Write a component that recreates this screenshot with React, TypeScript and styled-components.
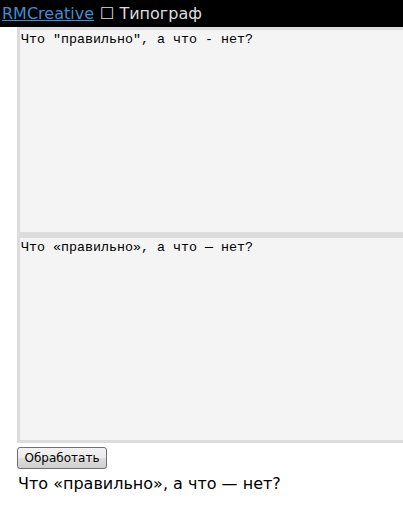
import React from "react";
import styled, { createGlobalStyle } from "styled-components";

const Global = createGlobalStyle`
  html, body { margin: 0; padding: 0; background: #fff; overflow: hidden; }
  body { font-family: "DejaVu Sans", Verdana, sans-serif; }
`;

const Header = styled.header`
  background: #000;
  height: 27px;
  display: flex;
  align-items: center;
  padding-left: 2px;
  font-size: 16px;
  color: #dcdcdc;
  white-space: nowrap;
`;

const Brand = styled.a`
  color: #3b8fd4;
  text-decoration: underline;
  margin-right: 6px;
`;

const Form = styled.form`
  display: flex;
  flex-direction: column;
  align-items: flex-start;
  padding-left: 17px;
`;

const Area = styled.textarea`
  box-sizing: border-box;
  width: 420px;
  height: 208px;
  margin: 0;
  border: 3px solid #dcdcdc;
  background: #f4f4f4;
  font-family: "Liberation Mono", "Courier New", monospace;
  font-size: 13.33px;
  line-height: 15px;
  color: #000;
  padding: 2px 1px;
  resize: none;
  outline: none;
  display: block;
`;

const Button = styled.button`
  margin-top: 4px;
  height: 22px;
  width: 90px;
  padding: 0;
  border: 1px solid #707070;
  border-radius: 3px;
  background: linear-gradient(#f2f2f2 0%, #ebebeb 50%, #dddddd 51%, #cfcfcf 100%);
  font-family: "DejaVu Sans", Tahoma, sans-serif;
  font-size: 12px;
  color: #000;
`;

const Result = styled.div`
  margin-top: 5px;
  font-size: 16px;
  color: #000;
  margin-left: 1px;
`;

export default function App() {
  return (
    <>
      <Global />
      <Header>
        <Brand href="#">RMCreative</Brand>
        <span>☐ Типограф</span>
      </Header>
      <Form onSubmit={(e) => e.preventDefault()}>
        <Area defaultValue={'Что "правильно", а что - нет?'} />
        <Area defaultValue={"Что «правильно», а что — нет?"} />
        <Button type="submit">Обработать</Button>
        <Result>Что «правильно», а что — нет?</Result>
      </Form>
    </>
  );
}
